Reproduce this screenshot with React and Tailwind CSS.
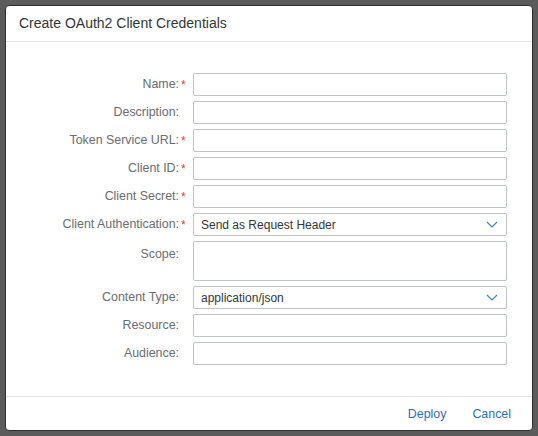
const fields = [
  { label: 'Name:', required: true },
  { label: 'Description:' },
  { label: 'Token Service URL:', required: true },
  { label: 'Client ID:', required: true },
  { label: 'Client Secret:', required: true },
  { label: 'Client Authentication:', required: true, select: 'Send as Request Header' },
  { label: 'Scope:', area: true },
  { label: 'Content Type:', select: 'application/json' },
  { label: 'Resource:' },
  { label: 'Audience:' },
];

const Chevron = () => (
  <svg width="12" height="7" viewBox="0 0 12 7" fill="none">
    <path d="M1 1l5 5 5-5" stroke="#3f80c8" strokeWidth="1.2" />
  </svg>
);

const Row = ({ f }) => (
  <div className={`flex ${f.area ? 'items-start' : 'items-center'}`}>
    <div
      className={`w-[173px] text-right text-[12.4px] text-[#6a6d70] ${f.area ? 'pt-[4px]' : ''}`}
    >
      {f.label}
    </div>
    <div className={`w-[14px] pl-[2px] text-[12px] text-[#e03c3c] ${f.area ? 'pt-[4px]' : ''}`}>
      {f.required ? '*' : ''}
    </div>
    <div
      className={`flex w-[314px] items-center justify-between rounded-[2px] border border-[#bfc3c8] bg-white px-[7px] ${
        f.area ? 'h-[40px]' : 'h-[23px]'
      }`}
    >
      <span className="text-[12px] text-[#32363a]">{f.select || ''}</span>
      {f.select && (
        <span className="mr-[1px]">
          <Chevron />
        </span>
      )}
    </div>
  </div>
);

export default function App() {
  return (
    <div
      className="h-[436px] w-[538px] overflow-hidden bg-[#5b5b5b] pl-[5px] pt-[5px]"
      style={{ fontFamily: '"Liberation Sans", Arial, sans-serif' }}
    >
      <div className="flex h-[426px] w-[528px] flex-col rounded-[4px] border border-[#2e2e2e] bg-white">
        {/* Header */}
        <div className="flex h-[36px] items-center border-b border-[#e5e5e5] pl-[13px]">
          <h1 className="text-[14px] text-[#32363a]">Create OAuth2 Client Credentials</h1>
        </div>

        {/* Form */}
        <div className="flex flex-1 flex-col gap-[5px] pt-[31px]">
          {fields.map((f) => (
            <Row key={f.label} f={f} />
          ))}
        </div>

        {/* Footer */}
        <div className="flex h-[34px] items-center justify-end gap-[26px] border-t border-[#e5e5e5] pr-[21px]">
          <button className="pt-[1px] text-[12.4px] text-[#2a6fba]">Deploy</button>
          <button className="pt-[1px] text-[12.4px] text-[#2a6fba]">Cancel</button>
        </div>
      </div>
    </div>
  );
}
